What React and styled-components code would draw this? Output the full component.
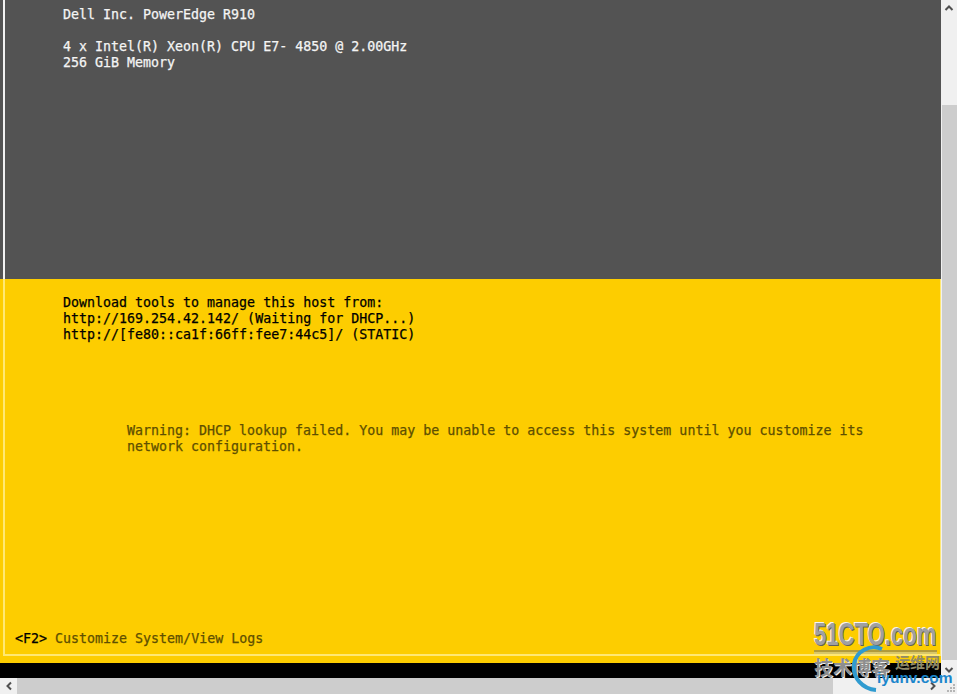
import React from "react";
import styled, { createGlobalStyle } from "styled-components";

const Global = createGlobalStyle`
  html, body { margin: 0; padding: 0; width: 957px; height: 694px; overflow: hidden; background: #f0f0f0; }
  #root { width: 957px; height: 694px; }
`;

const Shell = styled.div`
  display: grid;
  grid-template-columns: 941px 16px;
  grid-template-rows: 678px 16px;
  width: 957px;
  height: 694px;
  position: relative;
  overflow: hidden;
`;

const Console = styled.div`
  display: flex;
  flex-direction: column;
  background: #000;
  font-family: "DejaVu Sans Mono", "Liberation Mono", monospace;
  font-size: 13.3px;
  line-height: 16px;
  white-space: pre;
  -webkit-text-stroke: 0.25px currentColor;
`;

const TopPane = styled.div`
  height: 279px;
  flex: none;
  box-sizing: border-box;
  padding: 7px 0 0 60px;
  background: #535353;
  border-left: 3px solid #535353;
  color: #f4f4f4;
  box-shadow: inset 2px 0 0 #f2f2f2;
`;

const BottomPane = styled.div`
  height: 384px;
  flex: none;
  box-sizing: border-box;
  background: #fdcd00;
  display: flex;
  flex-direction: column;
`;

const Frame = styled.div`
  flex: 1;
  margin: 0 0 7px 3px;
  border-left: 2px solid #ffe873;
  border-bottom: 2px solid #ffe873;
  border-right: 1px solid #ffe873;
  display: flex;
  flex-direction: column;
  padding: 16px 0 0 58px;
`;

const Line = styled.div`
  color: ${p => p.$color || "#000"};
  margin-left: ${p => p.$indent || 0}px;
  margin-top: ${p => p.$top || 0}px;
`;

const Footer = styled.div`
  margin-top: auto;
  margin-left: -48px;
  margin-bottom: 7px;
  color: #5e4f00;
`;

const Key = styled.span`
  color: #000;
`;

const VBar = styled.div`
  background: #f0f0f0;
  display: flex;
  flex-direction: column;
  align-items: stretch;
`;

const ArrowBtn = styled.div`
  height: 16px;
  width: ${p => p.$w || 16}px;
  flex: none;
  display: flex;
  align-items: center;
  justify-content: center;
  color: #505050;
`;

const VThumb = styled.div`
  height: 555px;
  margin: 89px 0 2px 1px;
  flex: none;
  background: #cdcdcd;
`;

const HBar = styled.div`
  background: #f0f0f0;
  display: flex;
  justify-content: space-between;
`;

const HThumb = styled.div`
  width: 816px;
  flex: none;
  margin-right: auto;
  background: #cdcdcd;
`;

const Corner = styled.div`
  background: #f0f0f0;
  display: flex;
  align-items: flex-end;
  justify-content: flex-end;
`;

const Watermark = styled.div`
  position: absolute;
  left: 812px;
  top: 619px;
  width: 145px;
  height: 75px;
  font-family: "Liberation Sans", sans-serif;
`;

const Brand = styled.div`
  position: absolute;
  left: 2px;
  top: -2px;
  font-size: 32px;
  line-height: 34px;
  font-weight: bold;
  transform: scaleX(0.69);
  transform-origin: left;
  color: #a0a0a0;
  text-shadow: 1px 1px 0 #5f5f5f, -1px -1px 0 #f4f4f4;
`;

const Rule = styled.div`
  position: absolute;
  left: 2px;
  top: 31px;
  width: 123px;
  height: 2px;
  background: #b09a3c;
  box-shadow: 0 2px 0 #d8c76a;
`;

const BlogText = styled.div`
  position: absolute;
  left: 2px;
  top: 36px;
  font-family: "Noto Sans CJK SC", sans-serif;
  font-size: 19px;
  line-height: 24px;
  font-weight: 700;
  color: #8e8e8e;
  text-shadow: 1px 1px 0 #eee;
`;

const OpsText = styled.div`
  position: absolute;
  left: 83px;
  top: 33px;
  font-family: "Noto Sans CJK SC", sans-serif;
  font-size: 15px;
  line-height: 20px;
  font-weight: 700;
  color: #8f8a6a;
`;

const Site = styled.div`
  position: absolute;
  left: 65px;
  top: 49px;
  font-size: 15.5px;
  line-height: 20px;
  font-weight: bold;
  color: #1c86cc;
`;

const Ring = styled.svg`
  position: absolute;
  left: 38px;
  top: 26px;
`;

const Chevron = ({ d }) => (
  <svg width="10" height="10" viewBox="0 0 10 10" fill="none" stroke="currentColor" strokeWidth="2">
    <path d={d} />
  </svg>
);

const Grip = () => (
  <svg width="12" height="12" viewBox="0 0 12 12" fill="#b5b5b5">
    <rect x="8" y="2" width="2" height="2" />
    <rect x="5" y="5" width="2" height="2" />
    <rect x="8" y="5" width="2" height="2" />
    <rect x="2" y="8" width="2" height="2" />
    <rect x="5" y="8" width="2" height="2" />
    <rect x="8" y="8" width="2" height="2" />
  </svg>
);

export default function App() {
  return (
    <Shell>
      <Global />
      <Console>
        <TopPane>
          <Line $color="#f4f4f4">Dell Inc. PowerEdge R910</Line>
          <Line $color="#f4f4f4" $top={16}>4 x Intel(R) Xeon(R) CPU E7- 4850 @ 2.00GHz</Line>
          <Line $color="#f4f4f4">256 GiB Memory</Line>
        </TopPane>
        <BottomPane>
          <Frame>
            <Line>Download tools to manage this host from:</Line>
            <Line>http://169.254.42.142/ (Waiting for DHCP...)</Line>
            <Line>http://[fe80::ca1f:66ff:fee7:44c5]/ (STATIC)</Line>
            <Line $color="#5e4f00" $indent={64} $top={80}>Warning: DHCP lookup failed. You may be unable to access this system until you customize its</Line>
            <Line $color="#5e4f00" $indent={64}>network configuration.</Line>
            <Footer><Key>&lt;F2&gt;</Key> Customize System/View Logs</Footer>
          </Frame>
        </BottomPane>
      </Console>
      <VBar>
        <ArrowBtn><Chevron d="M1.5 7 L5 3.5 L8.5 7" /></ArrowBtn>
        <VThumb />
        <ArrowBtn><Chevron d="M1.5 3 L5 6.5 L8.5 3" /></ArrowBtn>
      </VBar>
      <HBar>
        <ArrowBtn $w={17}><Chevron d="M7 1.5 L3.5 5 L7 8.5" /></ArrowBtn>
        <HThumb />
        <ArrowBtn><Chevron d="M3 1.5 L6.5 5 L3 8.5" /></ArrowBtn>
      </HBar>
      <Corner><Grip /></Corner>
      <Watermark>
        <Brand>51CTO.com</Brand>
        <Rule />
        <BlogText>技术博客</BlogText>
        <OpsText>运维网</OpsText>
        <Ring width="50" height="48" viewBox="0 0 50 48" fill="none">
          <path d="M32 4 C20 -1 6 6 4 19 C2 33 13 44 26 45" stroke="#2f9bd0" strokeWidth="4" />
        </Ring>
        <Site>iyunv.com</Site>
      </Watermark>
    </Shell>
  );
}
